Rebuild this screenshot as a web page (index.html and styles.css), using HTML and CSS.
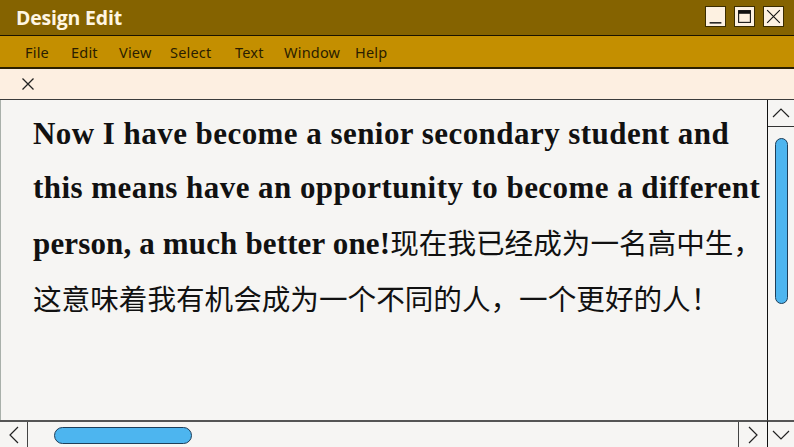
FILE: index.html
```html
<!DOCTYPE html>
<html lang="en">
<head>
<meta charset="utf-8">
<title>Design Edit</title>
<link rel="stylesheet" href="styles.css">
</head>
<body>
<div class="window">
  <header class="titlebar">
    <span class="title">Design Edit</span>
    <div class="controls">
      <span class="ctl ctl-min"><svg width="21" height="21" viewBox="0 0 21 21"><path d="M4 17.5h13" stroke="#111" stroke-width="1.6"/></svg></span>
      <span class="ctl ctl-max"><svg width="21" height="21" viewBox="0 0 21 21"><rect x="4" y="4" width="13" height="13" fill="none" stroke="#111" stroke-width="1.2"/><rect x="4" y="4" width="13" height="3.5" fill="#111"/></svg></span>
      <span class="ctl ctl-close"><svg width="21" height="21" viewBox="0 0 21 21"><path d="M3.5 3.5l14 14M17.5 3.5l-14 14" stroke="#111" stroke-width="1.2"/></svg></span>
    </div>
  </header>
  <nav class="menubar">
    <span class="menu m-file">File</span>
    <span class="menu m-edit">Edit</span>
    <span class="menu m-view">View</span>
    <span class="menu m-select">Select</span>
    <span class="menu m-text">Text</span>
    <span class="menu m-window">Window</span>
    <span class="menu m-help">Help</span>
  </nav>
  <div class="tabbar">
    <svg class="tab-close" width="14" height="14" viewBox="0 0 14 14"><path d="M1.5 1.5l11 11M12.5 1.5l-11 11" stroke="#222" stroke-width="1.3"/></svg>
  </div>
  <div class="workspace">
    <main class="content">
      <p class="text"><b>Now I have become a senior secondary student and</b><br><b>this means have an opportunity to become a different</b><br><b class="tight">person, a much better one!</b><span class="zh">现在我已经成为一名高中生，</span><br><span class="zh">这意味着我有机会成为一个不同的人，一个更好的人！</span></p>
    </main>
    <aside class="vscroll">
      <div class="arrow-up"><svg width="20" height="12" viewBox="0 0 20 12"><path d="M2 10l8-8 8 8" fill="none" stroke="#222" stroke-width="1.2"/></svg></div>
      <div class="vtrack"><div class="vthumb"></div></div>
    </aside>
    <footer class="hscroll">
      <div class="arrow-left"><svg width="12" height="20" viewBox="0 0 12 20"><path d="M10 2l-8 8 8 8" fill="none" stroke="#222" stroke-width="1.2"/></svg></div>
      <div class="htrack"><div class="hthumb"></div></div>
      <div class="arrow-right"><svg width="12" height="20" viewBox="0 0 12 20"><path d="M2 2l8 8-8 8" fill="none" stroke="#222" stroke-width="1.2"/></svg></div>
    </footer>
    <div class="arrow-down"><svg width="20" height="12" viewBox="0 0 20 12"><path d="M2 2l8 8 8-8" fill="none" stroke="#222" stroke-width="1.2"/></svg></div>
  </div>
</div>
</body>
</html>
```
FILE: styles.css
```css
* { box-sizing: border-box; }
html, body { margin: 0; padding: 0; }
body {
  width: 794px;
  height: 447px;
  overflow: hidden;
  background: #f6f5f3;
}
.window {
  width: 794px;
  height: 447px;
  display: flex;
  flex-direction: column;
}
.titlebar {
  height: 36px;
  background: #856300;
  border-bottom: 1px solid #1a1300;
  display: flex;
  align-items: center;
  justify-content: space-between;
  padding: 1px 10px 1px 16px;
}
.title {
  font-family: "Open Sans", "Noto Sans", sans-serif;
  font-weight: 700;
  font-size: 19.5px;
  color: #fff6e2;
  letter-spacing: -0.2px;
}
.controls {
  display: flex;
  gap: 8px;
  padding-bottom: 2px;
}
.ctl {
  width: 21px;
  height: 21px;
  background: #fdf1e1;
  border: 1px solid #3a2c00;
  display: flex;
  align-items: center;
  justify-content: center;
}
.ctl svg { display: block; }
.menubar {
  height: 33px;
  background: #c48f00;
  border-bottom: 2px solid #2a1f00;
  display: flex;
  align-items: center;
  padding: 1px 0 0 25px;
  font-family: "Noto Sans", "DejaVu Sans", sans-serif;
  font-size: 14.5px;
  color: #2a1d00;
  letter-spacing: 0.2px;
}
.menu { display: block; }
.m-file { width: 46px; }
.m-edit { width: 48px; }
.m-view { width: 51px; }
.m-select { width: 65px; }
.m-text { width: 49px; }
.m-window { width: 71px; }
.tabbar {
  height: 31px;
  background: #fdefe1;
  border-bottom: 1px solid #3b3b3b;
  display: flex;
  align-items: center;
  padding-left: 21px;
}
.workspace {
  flex: 1;
  display: grid;
  grid-template-columns: 767px 27px;
  grid-template-rows: 320px 1fr;
}
.content {
  background: #f6f5f3;
  border-left: 1px solid #a9b0aa;
  padding: 7px 0 0 32px;
  overflow: hidden;
}
.text {
  margin: 0;
  font-family: "Liberation Serif", "Noto Sans CJK SC", serif;
  font-size: 31px;
  line-height: 54px;
  color: #111;
  white-space: nowrap;
}
.text b { font-weight: 700; letter-spacing: 0.45px; }
.text b.tight { letter-spacing: 0.15px; }
.zh {
  font-family: "Noto Sans CJK SC", sans-serif;
  font-size: 28.6px;
  font-weight: 400;
}
.vscroll {
  background: #f6f5f3;
  border-left: 1px solid #111;
  display: flex;
  flex-direction: column;
}
.arrow-up {
  height: 27px;
  border-bottom: 1px solid #333;
  display: flex;
  align-items: center;
  justify-content: center;
}
.vtrack {
  flex: 1;
  padding: 11px 0 0 7px;
}
.vthumb {
  width: 13px;
  height: 166px;
  background: #4db5ef;
  border: 1px solid #1f3e58;
  border-radius: 7px;
}
.hscroll {
  border-top: 2px solid #555;
  display: flex;
  background: #f6f5f3;
}
.arrow-left, .arrow-right {
  width: 28px;
  display: flex;
  align-items: center;
  justify-content: center;
}
.arrow-left { border-right: 1px solid #444; }
.arrow-right { border-left: 1px solid #444; width: 29px; }
.htrack {
  flex: 1;
  padding: 5px 0 0 26px;
}
.hthumb {
  width: 138px;
  height: 17px;
  background: #4db5ef;
  border: 1px solid #1f3e58;
  border-radius: 9px;
}
.arrow-down {
  border-top: 2px solid #555;
  border-left: 1px solid #111;
  background: #f6f5f3;
  display: flex;
  align-items: center;
  justify-content: center;
}
```
